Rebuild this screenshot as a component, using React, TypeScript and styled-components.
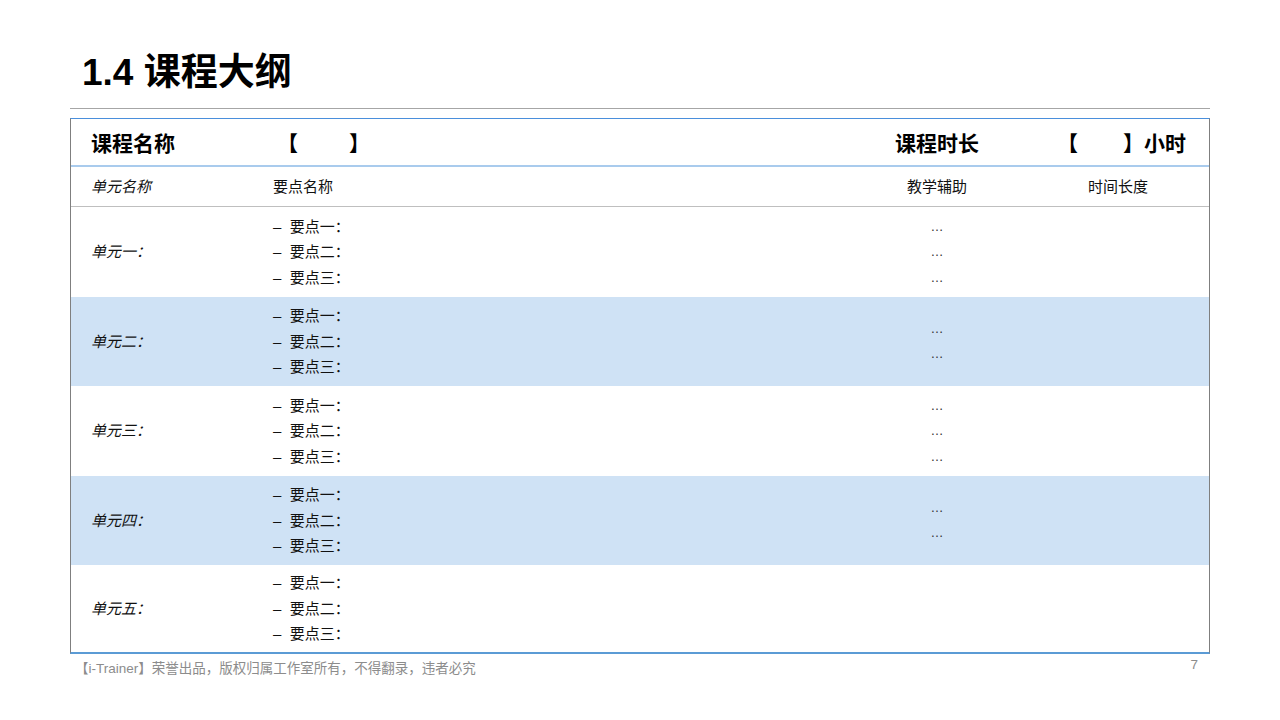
import React from "react";
import styled, { createGlobalStyle } from "styled-components";

const G = createGlobalStyle`
  body { margin:0; background:#fff; font-family: "Liberation Sans","Noto Sans CJK SC",sans-serif; color:#111; }
`;
const Page = styled.div`width:1280px;height:720px;position:relative;overflow:hidden;display:flex;flex-direction:column;`;
const Title = styled.h1`margin:0;padding:51px 0 0 82px;height:57px;font-size:37px;font-weight:700;line-height:44px;color:#000;`;
const Rule = styled.div`margin:0 70px;height:1px;background:#a6a6a6;`;
const Table = styled.div`
  margin:9px 70px 0;border-top:1.5px solid #4a8fdc;border-bottom:2px solid #5b9bd5;
  border-left:1px solid #7f7f7f;border-right:1px solid #7f7f7f;
  display:grid;grid-template-columns:184px 592px 180px 1fr;
`;
const Cell = styled.div<{ $bg?: boolean; $center?: boolean; $h: number; $bb?: string }>`
  height:${p=>p.$h}px;box-sizing:border-box;display:flex;flex-direction:column;justify-content:center;
  align-items:${p=>p.$center?"center":"flex-start"};
  background:${p=>p.$bg?"#cfe2f5":"#fff"};
  border-bottom:${p=>p.$bb||"none"};
  font-size:15px;line-height:25.5px;
`;
const HeadRow = styled.div<{ $pl?: number }>`display:flex;align-items:center;padding-left:${p=>p.$pl||0}px;padding-top:3px;`;
const Bold = styled.span<{ $w?: number }>`font-size:21px;font-weight:700;${p=>p.$w?`width:${p.$w}px;`:""}white-space:pre;color:#000;`;
const It = styled.span`font-style:italic;padding-left:20px;`;
const Pt = styled.span`padding-left:18px;white-space:pre;`;
const Dots = styled.span`color:#333;font-size:13px;`;
const Footer = styled.div`display:flex;justify-content:space-between;padding:3px 82px 0 75px;font-size:13.5px;color:#8c8c8c;`;

const rows = [3,2,3,2,0];
const names = ["一","二","三","四","五"];
const hb = "2px solid #a9cbed";
export default function App(){
  return <Page><G/>
    <Title>1.4 课程大纲</Title>
    <Rule/>
    <Table>
      <Cell $h={48} $bb={hb}><HeadRow $pl={20}><Bold>课程名称</Bold></HeadRow></Cell>
      <Cell $h={48} $bb={hb}><HeadRow $pl={22}><Bold $w={72}>【</Bold><Bold>】</Bold></HeadRow></Cell>
      <Cell $h={48} $bb={hb} $center><HeadRow><Bold>课程时长</Bold></HeadRow></Cell>
      <Cell $h={48} $bb={hb}><HeadRow $pl={30}><Bold $w={66}>【</Bold><Bold>】小时</Bold></HeadRow></Cell>
      <Cell $h={40} $bb="1px solid #bfbfbf"><It>单元名称</It></Cell>
      <Cell $h={40} $bb="1px solid #bfbfbf"><Pt>要点名称</Pt></Cell>
      <Cell $h={40} $bb="1px solid #bfbfbf" $center>教学辅助</Cell>
      <Cell $h={40} $bb="1px solid #bfbfbf" $center>时间长度</Cell>
      {rows.map((n,i)=>{const bg=i%2===1;const h=i===4?87:89.5;return <React.Fragment key={i}>
        <Cell $h={h} $bg={bg}><It>单元{names[i]}：</It></Cell>
        <Cell $h={h} $bg={bg}>
          <Pt>–  要点一：</Pt><Pt>–  要点二：</Pt><Pt>–  要点三：</Pt>
        </Cell>
        <Cell $h={h} $bg={bg} $center>{Array.from({length:n}).map((_,k)=><Dots key={k}>…</Dots>)}</Cell>
        <Cell $h={h} $bg={bg}/>
      </React.Fragment>})}
    </Table>
    <Footer><span>【i-Trainer】荣誉出品，版权归属工作室所有，不得翻录，违者必究</span><span>7</span></Footer>
  </Page>;
}
